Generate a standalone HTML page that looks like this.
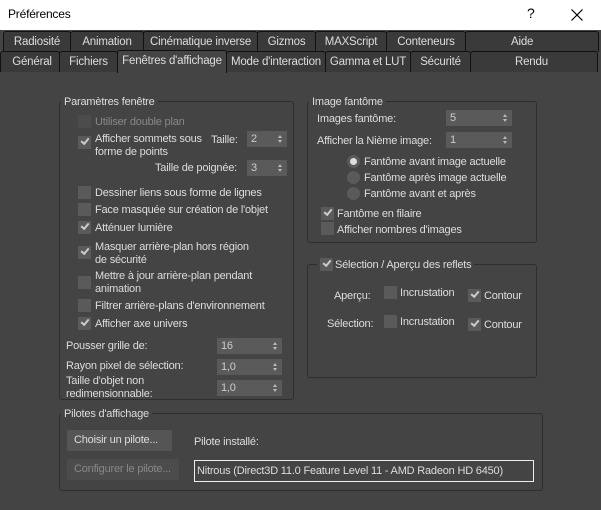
<!DOCTYPE html>
<html><head><meta charset="utf-8"><style>
*{box-sizing:border-box}
body{margin:0;width:601px;height:510px;background:#444;font-family:"Liberation Sans",sans-serif;font-size:11px;letter-spacing:-0.2px;color:#ddd;position:relative;overflow:hidden}
.a{position:absolute;white-space:nowrap;line-height:13px;padding-top:1px}
.title{position:absolute;left:0;top:0;width:601px;height:30px;background:#fff;color:#000}
.tab{position:absolute;height:21px;background:#3a3a3a;border:1px solid #111;border-bottom:none;border-radius:3px 3px 0 0;text-align:center;line-height:20px;color:#ddd;white-space:nowrap;overflow:hidden;font-size:11.5px}
.grp{position:absolute;border:1px solid #2e2e2e;border-radius:3px}
.gt{position:absolute;background:#444;padding:0 3px;line-height:14px;white-space:nowrap;padding-top:1px}
.cb{position:absolute;width:13px;height:13px;background:#5a5a5a}
.cb.on::after{content:"";position:absolute;left:3px;top:2px;width:6px;height:3px;border-left:2px solid #ccc;border-bottom:2px solid #ccc;transform:rotate(-50deg)}
.dis{background:#4c4c4c}
.sp{position:absolute;height:16px;background:#5a5a5a;padding-left:4px;line-height:16px;color:#ccc}
.sp::after{content:"";position:absolute;right:5px;top:4px;border-left:2px solid transparent;border-right:2px solid transparent;border-bottom:3px solid #bbb}
.sp::before{content:"";position:absolute;right:5px;top:9px;border-left:2px solid transparent;border-right:2px solid transparent;border-top:3px solid #bbb}
.rd{position:absolute;width:13px;height:13px;border-radius:50%;background:#5a5a5a}
.btn{position:absolute;background:#555;border-radius:2px;line-height:21px;padding-left:7px;white-space:nowrap;height:21px}
</style></head><body>
<div class="title"><span class="a" style="left:8px;top:7px;color:#000;font-size:12px">Préférences</span><span class="a" style="left:527px;top:6px;color:#000;font-size:14px">?</span>
<svg style="position:absolute;left:571px;top:9px" width="12" height="12"><path d="M0.5 0.5L11.5 11.5M11.5 0.5L0.5 11.5" stroke="#000" stroke-width="1.2"/></svg></div>
<div style="position:absolute;left:0;top:30px;width:601px;height:42px;background:#444"></div>
<div class="tab" style="left:3px;top:31px;width:68px">Radiosité</div>
<div class="tab" style="left:70px;top:31px;width:74px">Animation</div>
<div class="tab" style="left:143px;top:31px;width:115px">Cinématique inverse</div>
<div class="tab" style="left:257px;top:31px;width:59px">Gizmos</div>
<div class="tab" style="left:315px;top:31px;width:72px">MAXScript</div>
<div class="tab" style="left:386px;top:31px;width:80px">Conteneurs</div>
<div class="tab" style="left:465px;top:31px;width:134px;text-align:left;padding-left:45px">Aide</div>
<div class="tab" style="left:0px;top:51px;width:60px;padding-left:4px">Général</div>
<div class="tab" style="left:59px;top:51px;width:59px">Fichiers</div>
<div class="tab" style="left:117px;top:50px;width:110px;height:23px;background:#444">Fenêtres d'affichage</div>
<div class="tab" style="left:226px;top:51px;width:100px">Mode d'interaction</div>
<div class="tab" style="left:325px;top:51px;width:86px">Gamma et LUT</div>
<div class="tab" style="left:410px;top:51px;width:61px">Sécurité</div>
<div class="tab" style="left:470px;top:51px;width:128px;text-align:left;padding-left:44px">Rendu</div>

<div class="grp" style="left:59px;top:101px;width:235px;height:299px"></div>
<div class="gt" style="left:61px;top:94px">Paramètres fenêtre</div>
<div class="cb dis" style="left:78px;top:115px"></div><span class="a" style="left:95px;top:115px;color:#888">Utiliser double plan</span>
<div class="cb on" style="left:78px;top:136px"></div><span class="a" style="left:95px;top:132px">Afficher sommets sous<br>forme de points</span>
<span class="a" style="left:211px;top:133px">Taille:</span><div class="sp" style="left:247px;top:131px;width:40px">2</div>
<span class="a" style="left:155px;top:161px">Taille de poignée:</span><div class="sp" style="left:247px;top:160px;width:40px">3</div>
<div class="cb" style="left:78px;top:186px"></div><span class="a" style="left:95px;top:186px">Dessiner liens sous forme de lignes</span>
<div class="cb" style="left:78px;top:203px"></div><span class="a" style="left:95px;top:203px">Face masquée sur création de l'objet</span>
<div class="cb on" style="left:78px;top:221px"></div><span class="a" style="left:95px;top:221px">Atténuer lumière</span>
<div class="cb on" style="left:78px;top:246px"></div><span class="a" style="left:95px;top:240px">Masquer arrière-plan hors région<br>de sécurité</span>
<div class="cb" style="left:78px;top:276px"></div><span class="a" style="left:95px;top:269px">Mettre à jour arrière-plan pendant<br>animation</span>
<div class="cb" style="left:78px;top:299px"></div><span class="a" style="left:95px;top:299px">Filtrer arrière-plans d'environnement</span>
<div class="cb on" style="left:78px;top:317px"></div><span class="a" style="left:95px;top:317px">Afficher axe univers</span>
<span class="a" style="left:66px;top:339px">Pousser grille de:</span><div class="sp" style="left:217px;top:338px;width:65px">16</div>
<span class="a" style="left:66px;top:359px">Rayon pixel de sélection:</span><div class="sp" style="left:217px;top:359px;width:65px">1,0</div>
<span class="a" style="left:66px;top:374px">Taille d'objet non<br>redimensionnable:</span><div class="sp" style="left:217px;top:380px;width:65px">1,0</div>

<div class="grp" style="left:307px;top:101px;width:230px;height:142px"></div>
<div class="gt" style="left:309px;top:94px">Image fantôme</div>
<span class="a" style="left:317px;top:112px">Images fantôme:</span><div class="sp" style="left:446px;top:110px;width:66px">5</div>
<span class="a" style="left:317px;top:134px">Afficher la Nième image:</span><div class="sp" style="left:446px;top:132px;width:66px">1</div>
<div class="rd" style="left:347px;top:155px"><div style="position:absolute;left:3px;top:3px;width:7px;height:7px;border-radius:50%;background:#ddd"></div></div><span class="a" style="left:364px;top:155px">Fantôme avant image actuelle</span>
<div class="rd" style="left:347px;top:171px"></div><span class="a" style="left:364px;top:171px">Fantôme après image actuelle</span>
<div class="rd" style="left:347px;top:187px"></div><span class="a" style="left:364px;top:187px">Fantôme avant et après</span>
<div class="cb on" style="left:321px;top:207px"></div><span class="a" style="left:337px;top:207px">Fantôme en filaire</span>
<div class="cb" style="left:321px;top:222px"></div><span class="a" style="left:337px;top:223px">Afficher nombres d'images</span>

<div class="grp" style="left:307px;top:264px;width:230px;height:114px"></div>
<div class="gt" style="left:317px;top:257px;padding-left:2px"><span style="display:inline-block;width:16px"></span>Sélection / Aperçu des reflets</div>
<div class="cb on" style="left:320px;top:258px"></div>
<span class="a" style="left:334px;top:289px">Aperçu:</span>
<div class="cb" style="left:384px;top:286px"></div><span class="a" style="left:400px;top:286px">Incrustation</span>
<div class="cb on" style="left:468px;top:289px"></div><span class="a" style="left:484px;top:289px">Contour</span>
<span class="a" style="left:327px;top:317px">Sélection:</span>
<div class="cb" style="left:384px;top:315px"></div><span class="a" style="left:400px;top:315px">Incrustation</span>
<div class="cb on" style="left:468px;top:318px"></div><span class="a" style="left:484px;top:318px">Contour</span>

<div class="grp" style="left:59px;top:413px;width:484px;height:78px"></div>
<div class="gt" style="left:61px;top:406px">Pilotes d'affichage</div>
<div class="btn" style="left:67px;top:430px;width:105px">Choisir un pilote...</div>
<span class="a" style="left:194px;top:435px">Pilote installé:</span>
<div class="btn" style="left:67px;top:459px;width:112px;background:#4c4c4c;color:#888">Configurer le pilote...</div>
<div style="position:absolute;left:194px;top:460px;width:340px;height:22px;border:1px solid #eee;background:#444;line-height:20px;padding-left:2px;white-space:nowrap">Nitrous (Direct3D 11.0 Feature Level 11 - AMD Radeon HD 6450)</div>
</body></html>
